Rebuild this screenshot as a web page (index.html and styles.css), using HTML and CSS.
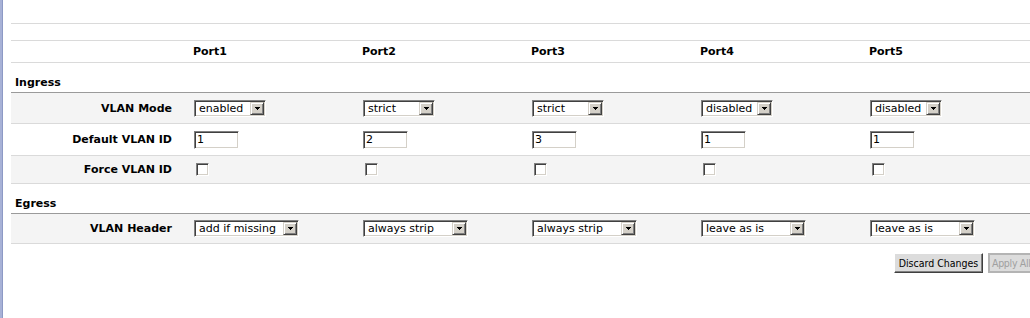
FILE: index.html
```html
<!DOCTYPE html>
<html lang="en">
<head>
  <meta charset="UTF-8">
  <title>VLAN Port Settings</title>
  <link rel="stylesheet" href="styles.css">
</head>
<body>

<div class="page">
  <div class="blank blank-top"></div>
  <div class="blank blank-mid"></div>

  <div class="row head-row">
    <div class="label"></div>
    <div class="cell">Port1</div>
    <div class="cell">Port2</div>
    <div class="cell">Port3</div>
    <div class="cell">Port4</div>
    <div class="cell">Port5</div>
  </div>

  <div class="section-title">Ingress</div>

  <div class="row shaded row-mode">
    <div class="label">VLAN Mode</div>
    <div class="cell"><span class="combo combo-mode"><span class="combo-value">enabled</span><span class="combo-arrow"><svg width="5" height="3" viewBox="0 0 5 3"><rect x="0" y="0" width="5" height="1"/><rect x="1" y="1" width="3" height="1"/><rect x="2" y="2" width="1" height="1"/></svg></span></span></div>
    <div class="cell"><span class="combo combo-mode"><span class="combo-value">strict</span><span class="combo-arrow"><svg width="5" height="3" viewBox="0 0 5 3"><rect x="0" y="0" width="5" height="1"/><rect x="1" y="1" width="3" height="1"/><rect x="2" y="2" width="1" height="1"/></svg></span></span></div>
    <div class="cell"><span class="combo combo-mode"><span class="combo-value">strict</span><span class="combo-arrow"><svg width="5" height="3" viewBox="0 0 5 3"><rect x="0" y="0" width="5" height="1"/><rect x="1" y="1" width="3" height="1"/><rect x="2" y="2" width="1" height="1"/></svg></span></span></div>
    <div class="cell"><span class="combo combo-mode"><span class="combo-value">disabled</span><span class="combo-arrow"><svg width="5" height="3" viewBox="0 0 5 3"><rect x="0" y="0" width="5" height="1"/><rect x="1" y="1" width="3" height="1"/><rect x="2" y="2" width="1" height="1"/></svg></span></span></div>
    <div class="cell"><span class="combo combo-mode"><span class="combo-value">disabled</span><span class="combo-arrow"><svg width="5" height="3" viewBox="0 0 5 3"><rect x="0" y="0" width="5" height="1"/><rect x="1" y="1" width="3" height="1"/><rect x="2" y="2" width="1" height="1"/></svg></span></span></div>
  </div>

  <div class="row row-id">
    <div class="label">Default VLAN ID</div>
    <div class="cell"><input class="text-box" type="text" value="1"></div>
    <div class="cell"><input class="text-box" type="text" value="2"></div>
    <div class="cell"><input class="text-box" type="text" value="3"></div>
    <div class="cell"><input class="text-box" type="text" value="1"></div>
    <div class="cell"><input class="text-box" type="text" value="1"></div>
  </div>

  <div class="row shaded row-force">
    <div class="label">Force VLAN ID</div>
    <div class="cell"><input class="check" type="checkbox"></div>
    <div class="cell"><input class="check" type="checkbox"></div>
    <div class="cell"><input class="check" type="checkbox"></div>
    <div class="cell"><input class="check" type="checkbox"></div>
    <div class="cell"><input class="check" type="checkbox"></div>
  </div>

  <div class="section-title">Egress</div>

  <div class="row shaded row-header">
    <div class="label">VLAN Header</div>
    <div class="cell"><span class="combo combo-header"><span class="combo-value">add if missing</span><span class="combo-arrow"><svg width="5" height="3" viewBox="0 0 5 3"><rect x="0" y="0" width="5" height="1"/><rect x="1" y="1" width="3" height="1"/><rect x="2" y="2" width="1" height="1"/></svg></span></span></div>
    <div class="cell"><span class="combo combo-header"><span class="combo-value">always strip</span><span class="combo-arrow"><svg width="5" height="3" viewBox="0 0 5 3"><rect x="0" y="0" width="5" height="1"/><rect x="1" y="1" width="3" height="1"/><rect x="2" y="2" width="1" height="1"/></svg></span></span></div>
    <div class="cell"><span class="combo combo-header"><span class="combo-value">always strip</span><span class="combo-arrow"><svg width="5" height="3" viewBox="0 0 5 3"><rect x="0" y="0" width="5" height="1"/><rect x="1" y="1" width="3" height="1"/><rect x="2" y="2" width="1" height="1"/></svg></span></span></div>
    <div class="cell"><span class="combo combo-header"><span class="combo-value">leave as is</span><span class="combo-arrow"><svg width="5" height="3" viewBox="0 0 5 3"><rect x="0" y="0" width="5" height="1"/><rect x="1" y="1" width="3" height="1"/><rect x="2" y="2" width="1" height="1"/></svg></span></span></div>
    <div class="cell"><span class="combo combo-header"><span class="combo-value">leave as is</span><span class="combo-arrow"><svg width="5" height="3" viewBox="0 0 5 3"><rect x="0" y="0" width="5" height="1"/><rect x="1" y="1" width="3" height="1"/><rect x="2" y="2" width="1" height="1"/></svg></span></span></div>
  </div>

  <div class="actions">
    <button class="btn btn-discard" type="button">Discard Changes</button>
    <button class="btn btn-apply" type="button" disabled>Apply All</button>
  </div>
</div>

</body>
</html>
```

FILE: styles.css
```css
html, body {
  margin: 0;
  padding: 0;
  overflow: hidden;
  background-color: #fff;
}
body {
  font-family: "DejaVu Sans", Verdana, sans-serif;
  font-size: 11px;
  color: #000;
}
.page {
  border-left: 2px solid #a7b1d6;
  box-shadow: inset 1px 0 0 #8d99c5;
  padding-left: 9px;
  width: 1040px;
  min-height: 318px;
}
.blank {
  border-bottom: 1px solid #dadada;
}
.blank-top {
  height: 23px;
}
.blank-mid {
  height: 16px;
}
.row {
  display: grid;
  grid-template-columns: 183px repeat(5, 169px);
  align-items: center;
  border-bottom: 1px solid #dadada;
}
.shaded {
  background-color: #f4f4f4;
}
.head-row {
  height: 21px;
  font-weight: bold;
  line-height: 22px;
}
.head-row .cell {
  margin-left: -1px;
}
.row-mode {
  height: 30px;
}
.row-id {
  height: 31px;
}
.row-force {
  height: 27px;
}
.row-header {
  height: 29px;
}
.label {
  text-align: right;
  padding-right: 22px;
  font-weight: bold;
}
.section-title {
  padding: 13px 4px 2px;
  line-height: 14px;
  font-weight: bold;
  border-bottom: 1px solid #9a9a9a;
}
.combo {
  display: inline-flex;
  box-sizing: border-box;
  height: 17px;
  vertical-align: middle;
  background-color: #fff;
  border: 1px solid;
  border-color: #808080 #fff #fff #808080;
  box-shadow: inset 1px 1px 0 #404040, inset -1px -1px 0 #d4d0c8;
  padding: 1px;
}
.combo-mode {
  width: 72px;
}
.combo-header {
  width: 105px;
}
.combo-value {
  flex: 1;
  padding-left: 3px;
  line-height: 14px;
  white-space: nowrap;
  overflow: hidden;
}
.combo-arrow {
  box-sizing: border-box;
  width: 14px;
  height: 13px;
  display: flex;
  align-items: center;
  justify-content: center;
  background-color: #d4d0c8;
  border: 1px solid;
  border-color: #d4d0c8 #404040 #404040 #d4d0c8;
  box-shadow: inset 1px 1px 0 #fff, inset -1px -1px 0 #808080;
}
.combo-arrow svg {
  display: block;
  fill: #000;
  shape-rendering: crispEdges;
}
.text-box {
  box-sizing: border-box;
  width: 45px;
  height: 18px;
  margin: 0;
  padding: 0 2px;
  font-family: "DejaVu Sans", Verdana, sans-serif;
  font-size: 11px;
  color: #000;
  background-color: #fff;
  border: 1px solid;
  border-color: #808080 #fff #fff #808080;
  box-shadow: inset 1px 1px 0 #404040, inset -1px -1px 0 #d4d0c8;
  outline: none;
  vertical-align: middle;
}
.check {
  -webkit-appearance: none;
  appearance: none;
  box-sizing: border-box;
  width: 13px;
  height: 13px;
  margin: 0 0 0 2px;
  background-color: #fff;
  border: 1px solid;
  border-color: #808080 #fff #fff #808080;
  box-shadow: inset 1px 1px 0 #404040, inset -1px -1px 0 #d4d0c8;
  vertical-align: middle;
}
.actions {
  display: flex;
  justify-content: flex-end;
  gap: 5px;
  padding-top: 9px;
}
.btn {
  box-sizing: border-box;
  height: 20px;
  padding: 0;
  font-family: "DejaVu Sans Condensed", "DejaVu Sans", sans-serif;
  font-stretch: condensed;
  font-size: 10.5px;
  background-color: #dcdcdc;
  border: 1px solid;
  border-color: #fff #404040 #404040 #fff;
  box-shadow: inset -1px -1px 0 #808080;
  color: #000;
}
.btn-discard {
  width: 89px;
}
.btn-apply {
  width: 63px;
  padding-left: 2px;
  text-align: left;
  white-space: nowrap;
  letter-spacing: -0.3px;
  color: #a0a0a0;
  border: 2px solid #b4b4b4;
  box-shadow: none;
}
```
